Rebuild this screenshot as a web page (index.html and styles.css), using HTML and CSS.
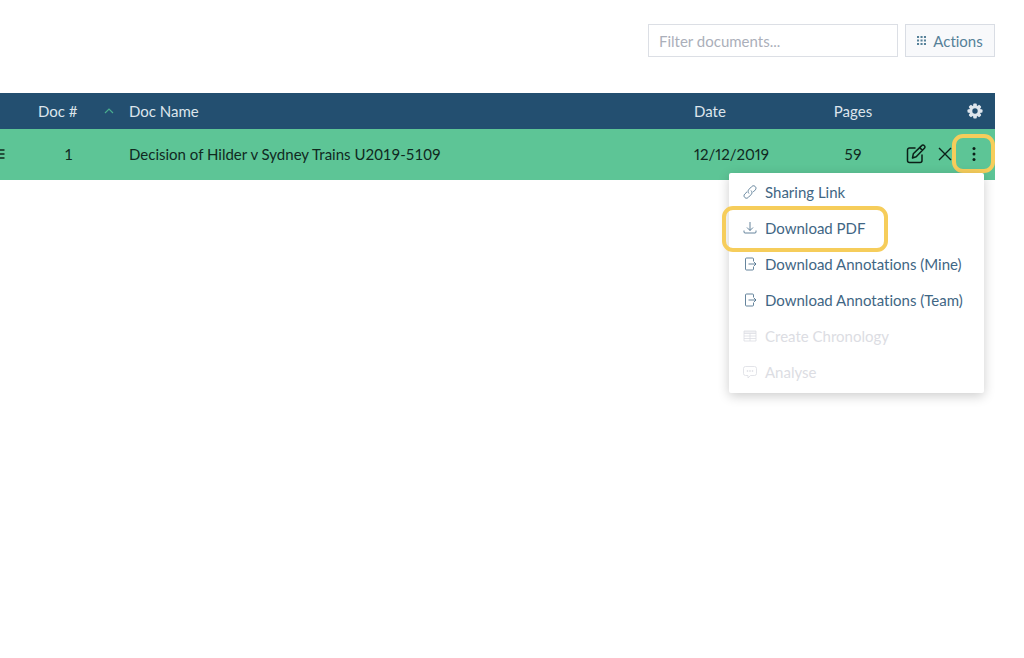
FILE: index.html
```html
<!DOCTYPE html>
<html lang="en">
<head>
<meta charset="utf-8">
<title>Documents</title>
<link rel="stylesheet" href="styles.css">
</head>
<body>
<main class="page">
  <div class="toolbar">
    <input class="filter" type="text" placeholder="Filter documents..." aria-label="Filter documents">
    <button class="actions-button" type="button">
      <svg class="grid-icon" viewBox="0 0 10 10" fill="currentColor" aria-hidden="true"><path d="M0 0h2.300v2.300H0zM3.900 0h2.300v2.300H3.900zM7.700 0H10v2.300H7.700zM0 3.900h2.300v2.300H0zM3.900 3.900h2.300v2.300H3.900zM7.700 3.900H10v2.300H7.700zM0 7.700h2.300V10H0zM3.900 7.700h2.300V10H3.900zM7.700 7.700H10V10H7.700z"/></svg>
      Actions
    </button>
  </div>

  <table class="documents">
    <colgroup>
      <col class="col-handle"><col class="col-number"><col><col class="col-date"><col class="col-pages"><col class="col-tools">
    </colgroup>
    <thead>
      <tr>
        <th></th>
        <th><span class="sortable">Doc #
          <svg class="sort-icon" viewBox="0 0 10 6" aria-hidden="true"><path d="M1 5l4-4 4 4" fill="none" stroke="currentColor" stroke-width="1.200"/></svg></span></th>
        <th>Doc Name</th>
        <th>Date</th>
        <th class="centered">Pages</th>
        <th class="settings-cell"><button class="icon-button settings" type="button" aria-label="Settings">
          <svg class="gear-icon" viewBox="0 0 16 16" aria-hidden="true"><g fill="currentColor"><rect x="6.200" y="0.500" width="3.600" height="15" rx="1"/><rect x="6.200" y="0.500" width="3.600" height="15" rx="1" transform="rotate(45 8 8)"/><rect x="6.200" y="0.500" width="3.600" height="15" rx="1" transform="rotate(90 8 8)"/><rect x="6.200" y="0.500" width="3.600" height="15" rx="1" transform="rotate(135 8 8)"/><circle cx="8" cy="8" r="5.800"/></g><circle cx="8" cy="8" r="2.700" fill="#234f70"/></svg>
        </button></th>
      </tr>
    </thead>
    <tbody>
      <tr>
        <td class="handle-cell"><svg class="handle-icon" viewBox="0 0 5 10" aria-hidden="true"><path d="M0 1h4.500M0 5h4.500M0 9h4.500" stroke="currentColor" stroke-width="1.300"/></svg></td>
        <td class="number">1</td>
        <td>Decision of Hilder v Sydney Trains U2019-5109</td>
        <td class="date">12/12/2019</td>
        <td class="centered">59</td>
        <td class="tools-cell">
          <div class="tools">
            <button class="icon-button" type="button" aria-label="Edit">
              <svg class="edit-icon" viewBox="0 0 20 20" fill="none" stroke="currentColor" stroke-width="1.500" stroke-linejoin="round" stroke-linecap="round" aria-hidden="true"><path d="M9 4H3.500A2 2 0 0 0 1.500 6v10.500a2 2 0 0 0 2 2H14a2 2 0 0 0 2-2V11"/><path d="M6.500 14l.8-4.200 8.400-8.200a1.700 1.700 0 0 1 2.500 0l.2.200a1.700 1.700 0 0 1 0 2.500L10.200 12.800zM13.700 3.600l2.700 2.700"/></svg>
            </button>
            <button class="icon-button" type="button" aria-label="Remove">
              <svg class="close-icon" viewBox="0 0 14 14" aria-hidden="true"><path d="M1 1l12 12M13 1L1 13" fill="none" stroke="currentColor" stroke-width="1.400"/></svg>
            </button>
            <div class="more">
              <button class="icon-button more-button" type="button" aria-label="More" aria-expanded="true">
                <svg class="dots-icon" viewBox="0 0 4 14" fill="currentColor" aria-hidden="true"><circle cx="2" cy="1.600" r="1.500"/><circle cx="2" cy="7" r="1.500"/><circle cx="2" cy="12.400" r="1.500"/></svg>
              </button>
              <div class="menu">
                <button class="menu-item" type="button"><svg class="menu-icon" viewBox="0 0 14 14" aria-hidden="true"><path d="M6 8.500C4.700 7.200 4.800 5.500 6 4.300L8.600 1.700c1.200-1.200 2.500-1.200 3.600-.2 1.100 1.100 1 2.500-.1 3.600L10 7.200M8 5.500c1.300 1.300 1.200 3 0 4.200l-2.600 2.600c-1.200 1.200-2.500 1.200-3.600.2-1.100-1.100-1-2.500.1-3.600L4 6.800"/></svg>Sharing Link</button>
                <button class="menu-item highlighted" type="button"><svg class="menu-icon" viewBox="0 0 14 14" aria-hidden="true"><path d="M7 1v8.500M4 6.500l3 3 3-3M1 9.500V11a1 1 0 0 0 1 1h10a1 1 0 0 0 1-1V9.500"/></svg>Download PDF</button>
                <button class="menu-item" type="button"><svg class="menu-icon" viewBox="0 0 14 14" aria-hidden="true"><path d="M10.500 4.500V2a1 1 0 0 0-1-1h-6a1 1 0 0 0-1 1v10a1 1 0 0 0 1 1h6a1 1 0 0 0 1-1V9.500M5.500 7H13M11 5l2 2-2 2"/></svg>Download Annotations (Mine)</button>
                <button class="menu-item" type="button"><svg class="menu-icon" viewBox="0 0 14 14" aria-hidden="true"><path d="M10.500 4.500V2a1 1 0 0 0-1-1h-6a1 1 0 0 0-1 1v10a1 1 0 0 0 1 1h6a1 1 0 0 0 1-1V9.500M5.500 7H13M11 5l2 2-2 2"/></svg>Download Annotations (Team)</button>
                <button class="menu-item" type="button" disabled><svg class="menu-icon" viewBox="0 0 14 14" aria-hidden="true"><path d="M1 2h12v10H1zM1 3h12M1 4.500h12M1 7h12M1 9.500h12M7 4.500V12"/></svg>Create Chronology</button>
                <button class="menu-item" type="button" disabled><svg class="menu-icon" viewBox="0 0 14 14" aria-hidden="true"><path d="M2.500 1.500h9a2 2 0 0 1 2 2v5a2 2 0 0 1-2 2H7.500L5 13v-2.500H2.500a2 2 0 0 1-2-2v-5a2 2 0 0 1 2-2z"/><path d="M3.800 6h1.400M6.300 6h1.400M8.800 6h1.400" stroke-width="1.400"/></svg>Analyse</button>
              </div>
            </div>
          </div>
        </td>
      </tr>
    </tbody>
  </table>
</main>
</body>
</html>
```
FILE: styles.css
```css
* {
  box-sizing: border-box;
}

body {
  margin: 0;
  background: #fff;
  color: #10291f;
  font-family: Lato, "Liberation Sans", sans-serif;
  font-size: 15px;
  font-variant-ligatures: none;
}

button,
input {
  font: inherit;
}

button {
  cursor: pointer;
}

svg {
  display: block;
  flex: none;
}

.page {
  min-height: 100vh;
  padding: 24px 29px 24px 0;
}

.toolbar {
  display: flex;
  justify-content: flex-end;
  gap: 7px;
  height: 33px;
  margin-bottom: 36px;
}

.filter {
  width: 250px;
  padding: 0 10px;
  border: 1px solid #dcdfe5;
  background: #fff;
}

.filter::placeholder {
  color: #abafba;
}

.actions-button {
  display: flex;
  align-items: center;
  justify-content: center;
  gap: 7px;
  width: 90px;
  padding: 0;
  border: 1px solid #d9dde4;
  background: #f8f9fb;
  color: #568199;
}

.grid-icon {
  width: 9px;
  height: 9px;
}

.documents {
  width: 100%;
  table-layout: fixed;
  border-collapse: collapse;
}

.col-handle {
  width: 28px;
}

.col-number {
  width: 91px;
}

.col-date {
  width: 129px;
}

.col-pages {
  width: 80px;
}

.col-tools {
  width: 102px;
}

th {
  height: 36px;
  padding: 0 0 0 10px;
  background: #234f70;
  color: #dde5ec;
  font-weight: 400;
  text-align: left;
}

td {
  height: 51px;
  padding: 0 0 2px 10px;
  background: #5dc596;
}

.sortable {
  display: flex;
  align-items: center;
  justify-content: space-between;
  padding-right: 5px;
}

.sort-icon {
  width: 10px;
  height: 6px;
  color: #49ad8e;
}

.date {
  font-variant-numeric: proportional-nums;
}

.centered {
  padding-left: 0;
  text-align: center;
}

.handle-cell {
  padding-left: 0;
}

.handle-icon {
  width: 5px;
  height: 10px;
}

.number {
  padding-right: 10px;
  padding-left: 0;
  text-align: center;
}

.icon-button {
  display: flex;
  align-items: center;
  justify-content: center;
  padding: 0;
  border: 0;
  background: none;
  color: inherit;
}

.settings-cell {
  padding: 0 12px 0 0;
}

.settings {
  margin-left: auto;
}

.gear-icon {
  width: 16px;
  height: 16px;
}

.tools-cell {
  padding-left: 0;
  color: #0b1f17;
}

.tools {
  display: flex;
  align-items: center;
  justify-content: flex-end;
}

.edit-icon {
  width: 20px;
  height: 20px;
  margin-right: 12px;
}

.close-icon {
  width: 14px;
  height: 14px;
}

.more {
  position: relative;
}

.more-button {
  width: 43px;
  height: 39px;
  border: 4px solid #f6cd5b;
  border-radius: 11px;
}

.dots-icon {
  width: 4px;
  height: 14px;
}

.menu {
  position: absolute;
  top: 100%;
  right: 11px;
  width: 255px;
  padding: 1px 0 3px;
  border-radius: 2px;
  background: #fff;
  box-shadow: 0 3px 12px rgba(0, 0, 0, 0.2);
}

.menu-item {
  position: relative;
  display: flex;
  align-items: center;
  gap: 8px;
  width: 100%;
  height: 36px;
  padding: 0 14px;
  border: 0;
  background: none;
  color: #3f6684;
  white-space: nowrap;
}

.menu-item:disabled {
  color: #dcdde3;
}

.menu-icon {
  width: 14px;
  height: 14px;
  fill: none;
  stroke: currentColor;
  stroke-width: 0.8;
}

.highlighted::after {
  content: "";
  position: absolute;
  top: -4px;
  left: -7px;
  box-sizing: border-box;
  width: 166px;
  height: 46px;
  border: 4px solid #f6cd5b;
  border-radius: 11px;
}
```
